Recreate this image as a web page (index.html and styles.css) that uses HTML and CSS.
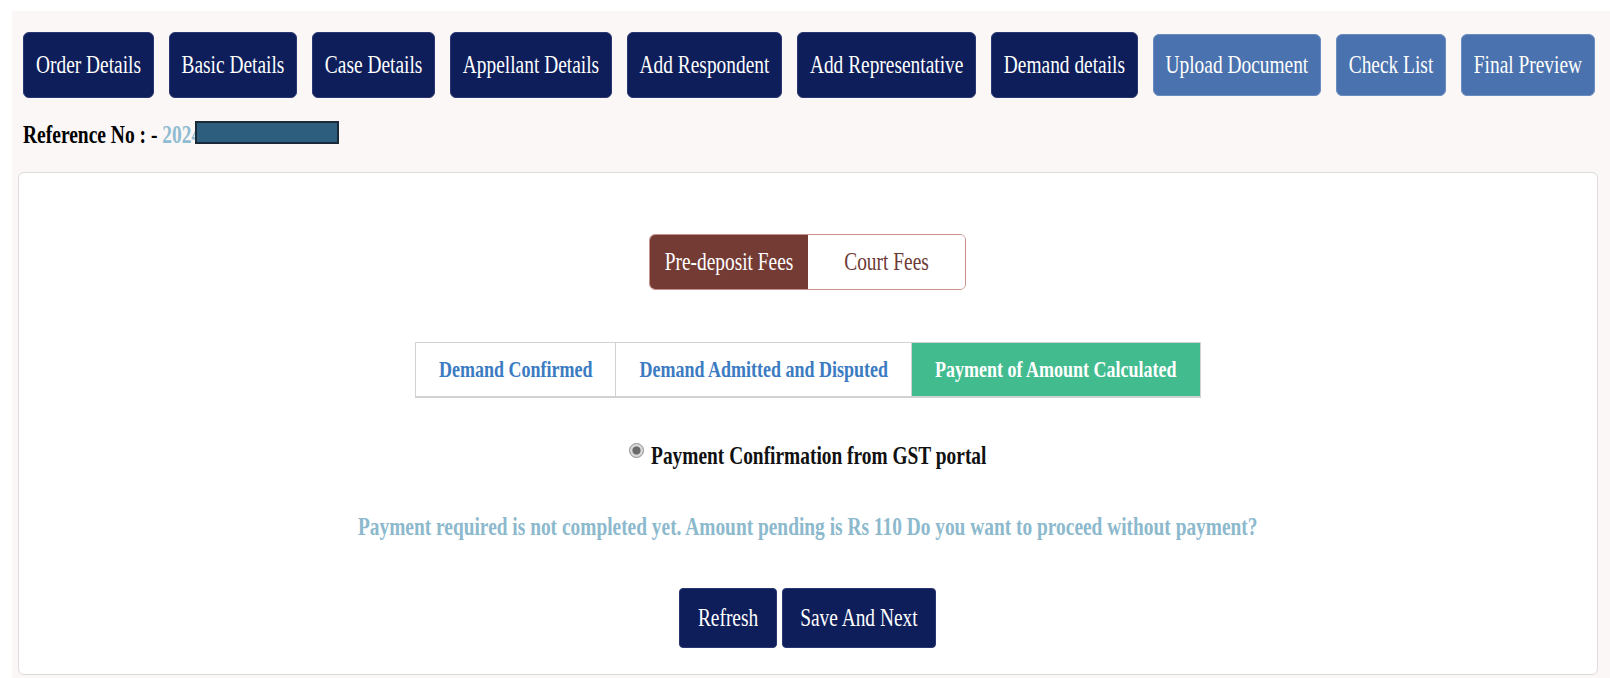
FILE: index.html
```html
<!DOCTYPE html>
<html lang="en">
<head>
  <meta charset="UTF-8" />
  <meta name="viewport" content="width=device-width, initial-scale=1.0"/>
  <title>Appeal - Demand Details</title>
  <link rel="stylesheet" href="styles.css">
</head>
<body>

  <div class="wrap">

    <nav class="steps">
      <button class="step"><span class="txt">Order Details</span></button>
      <button class="step"><span class="txt">Basic Details</span></button>
      <button class="step"><span class="txt">Case Details</span></button>
      <button class="step"><span class="txt">Appellant Details</span></button>
      <button class="step"><span class="txt">Add Respondent</span></button>
      <button class="step"><span class="txt">Add Representative</span></button>
      <button class="step"><span class="txt">Demand details</span></button>
      <button class="step step-next"><span class="txt">Upload Document</span></button>
      <button class="step step-next"><span class="txt">Check List</span></button>
      <button class="step step-next"><span class="txt">Final Preview</span></button>
    </nav>

    <p class="ref-no"><span class="txt">Reference No : - <span class="ref-val">2024</span></span><span class="redact"></span></p>

    <div class="panel">

      <div class="fee-toggle">
        <button class="fee active"><span class="txt">Pre-deposit Fees</span></button>
        <button class="fee"><span class="txt">Court Fees</span></button>
      </div>

      <div class="tabs">
        <div class="tab"><span class="txt">Demand Confirmed</span></div>
        <div class="tab"><span class="txt">Demand Admitted and Disputed</span></div>
        <div class="tab active"><span class="txt">Payment of Amount Calculated</span></div>
      </div>

      <label class="confirm">
        <input type="radio" class="radio" checked disabled><span class="txt">Payment Confirmation from GST portal</span>
      </label>

      <p class="notice"><span class="txt">Payment required is not completed yet. Amount pending is Rs 110 Do you want to proceed without payment?</span></p>

      <div class="actions">
        <button class="action"><span class="txt">Refresh</span></button>
        <button class="action"><span class="txt">Save And Next</span></button>
      </div>

    </div>
  </div>

</body>
</html>
```

FILE: styles.css
```css
body {
  font-family: "Liberation Serif", "Times New Roman", serif;
  background: #fff;
  margin: 11px 0 0 12px;
  overflow: hidden;
}

button {
  font-family: inherit;
  cursor: pointer;
}

/* the portal's font is drawn tall and narrow */
.txt {
  display: inline-block;
  transform: scaleY(1.3);
}

.wrap {
  background: #fcf7f7;
  min-height: calc(100vh - 11px);
  padding: 21px 12px 3px 5.5px;
  box-sizing: border-box;
}

/* step buttons */
.steps {
  display: flex;
  align-items: center;
  gap: 14.5px;
  margin-left: 5.5px;
}

.step {
  height: 66px;
  padding: 0 12px;
  font-size: 19.4px;
  color: #fff;
  background: #0e1e5b;
  border: 1px solid #2a3670;
  border-radius: 6px;
  white-space: nowrap;
}

.step-next {
  height: 62px;
  background: #4a72ae;
  border-color: #6a8cc0;
}

.ref-no {
  margin: 23px 0 0 5.5px;
  font-size: 19.5px;
  font-weight: bold;
  line-height: 27px;
  color: #000;
}

.ref-val {
  color: #8fbcd0;
}

/* masked reference number, sits over the last digit */
.redact {
  position: relative;
  display: inline-block;
  width: 144px;
  height: 23px;
  margin-left: -6.5px;
  vertical-align: -3px;
  box-sizing: border-box;
  background: #2e5e7e;
  border: 2px solid #1b2a38;
}

/* main card */
.panel {
  margin-top: 23.5px;
  background: #fff;
  border: 1px solid #dcdcdc;
  border-radius: 6px;
  padding: 61px 0 26.6px;
  text-align: center;
}

.fee-toggle {
  display: flex;
  width: fit-content;
  margin: 0 auto;
  height: 56px;
  box-sizing: border-box;
  border: 1px solid #c8918c;
  border-radius: 6px;
  overflow: hidden;
}

.fee {
  width: 157.5px;
  border: none;
  background: #fff;
  color: #6e3a36;
  font-size: 19.4px;
}

.fee.active {
  background: #743b35;
  color: #fff;
}

.tabs {
  display: flex;
  width: fit-content;
  margin: 52.4px auto 0;
  border: 1px solid #d2d2d2;
  border-bottom-width: 2px;
}

.tab {
  padding: 0 23px;
  line-height: 53px;
  font-size: 18px;
  font-weight: bold;
  color: #3b7bc2;
  background: #fff;
}

.tab + .tab {
  border-left: 1px solid #d2d2d2;
}

.tab.active {
  background: #42bb8f;
  color: #fff;
}

.confirm {
  display: block;
  margin-top: 45.3px;
  line-height: 24px;
  font-size: 19.4px;
  font-weight: bold;
  color: #111;
}

.radio {
  appearance: none;
  display: inline-block;
  width: 15px;
  height: 15px;
  margin: 0 7px 0 0;
  vertical-align: 3.5px;
  border-radius: 50%;
  border: 1px solid #8c8c8c;
  background: radial-gradient(circle, #6b6b6b 0 3.6px, #d9d9d9 4.6px);
}

.notice {
  margin: 47px 0 0;
  line-height: 24px;
  font-size: 19.4px;
  font-weight: bold;
  color: #8cb9cd;
}

.actions {
  display: flex;
  justify-content: center;
  gap: 5px;
  margin-top: 49px;
}

.action {
  height: 60px;
  padding: 0 17.5px;
  font-size: 19.4px;
  color: #fff;
  background: #0e1e5b;
  border: 1px solid #2a3670;
  border-radius: 4px;
}
```
